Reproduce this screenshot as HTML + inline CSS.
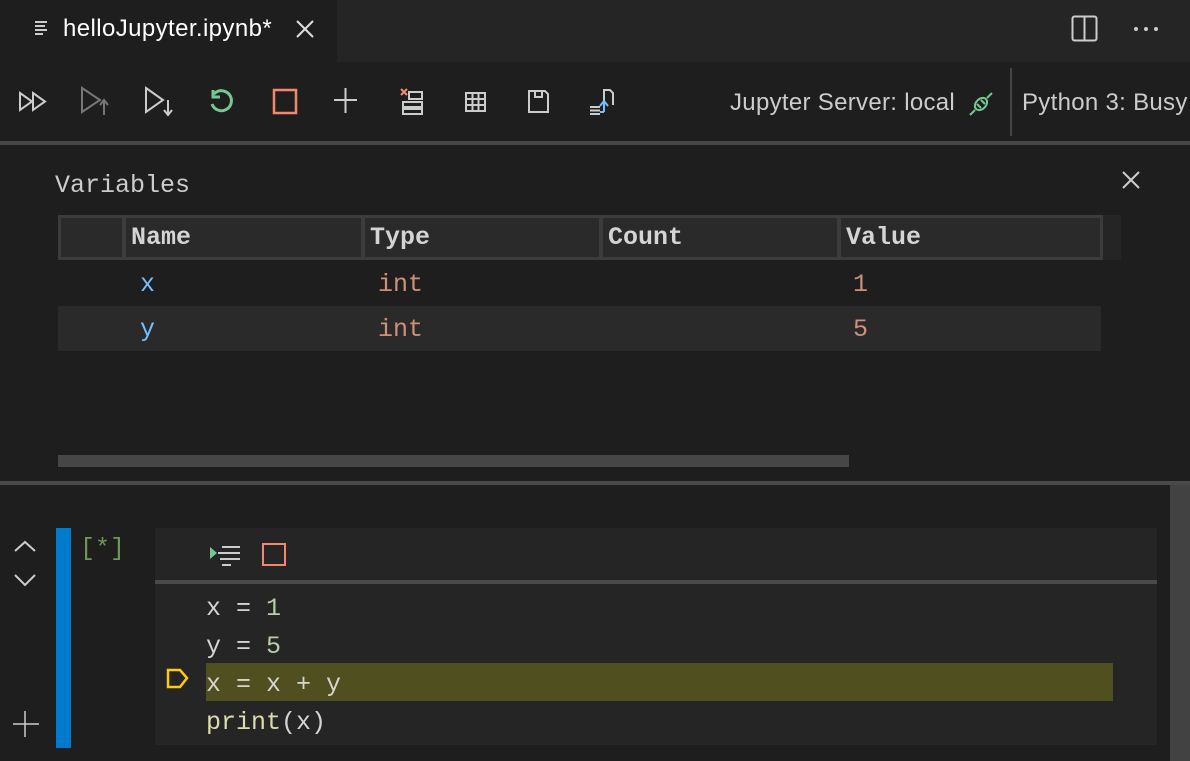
<!DOCTYPE html>
<html><head><style>
*{margin:0;padding:0;box-sizing:border-box}
body{width:1190px;height:761px;background:#1e1e1e;position:relative;overflow:hidden;font-family:"Liberation Sans",sans-serif;color:#ccc}
.a{position:absolute}
.mono{font-family:"Liberation Mono","DejaVu Sans Mono",monospace;font-size:25px}
.th{position:absolute;top:215px;height:45px;border:3px solid #3c3c3c;background:#2a2a2a;font-weight:bold;color:#d4d4d4;padding:8px 5px;line-height:24px}
</style></head><body>
<div class="a" style="left:0;top:0;width:1190px;height:62px;background:#252526"></div>
<div class="a" style="left:0;top:0;width:337px;height:62px;background:#1e1e1e"></div>
<svg class="a" style="left:33px;top:20px" width="16" height="16"><g stroke="#ccc" stroke-width="2"><line x1="2" y1="2" x2="14" y2="2"/><line x1="2" y1="6" x2="12" y2="6"/><line x1="2" y1="10" x2="14" y2="10"/><line x1="2" y1="14" x2="10" y2="14"/></g></svg>
<div class="a" style="left:63px;top:15px;font-size:24px;letter-spacing:0.4px;color:#fff">helloJupyter.ipynb*</div>
<svg class="a" style="left:296px;top:20px" width="18" height="18"><g stroke="#ddd" stroke-width="2"><line x1="1" y1="1" x2="17" y2="17"/><line x1="17" y1="1" x2="1" y2="17"/></g></svg>
<svg class="a" style="left:1071px;top:15px" width="27" height="27"><rect x="1.5" y="1.5" width="24" height="24" rx="2" fill="none" stroke="#ccc" stroke-width="2"/><line x1="13.5" y1="2" x2="13.5" y2="25" stroke="#ccc" stroke-width="2"/></svg>
<svg class="a" style="left:1133px;top:26px" width="28" height="6"><g fill="#ccc"><circle cx="3" cy="3" r="2"/><circle cx="13" cy="3" r="2"/><circle cx="23" cy="3" r="2"/></g></svg>

<!-- toolbar icons -->
<svg class="a" style="left:0;top:80px" width="640" height="45" fill="none" stroke-width="2">
<g stroke="#ccc"><path d="M20 13 L32 21.5 L20 30 Z"/><path d="M33 13 L45 21.5 L33 30 Z"/></g>
<g stroke="#777"><path d="M82 8 L100 20 L82 32 Z"/><path d="M104 35 V21 M100 25 L104 20 L108 25"/></g>
<g stroke="#ccc"><path d="M146 8 L163 20 L146 32 Z"/><path d="M168 20 V34 M164 30 L168 35 L172 30"/></g>
<path d="M214 14 A10 10 0 1 1 212 24 M213 10 V17 H220" stroke="#73c991" stroke-width="3"/>
<rect x="274" y="10" width="22" height="23" stroke="#f48771" stroke-width="2.5"/>
<g stroke="#ccc"><path d="M334 20 H357 M345.5 8 V33"/></g>
<g stroke="#ccc"><rect x="409" y="12" width="13" height="7"/><rect x="403" y="22" width="19" height="5"/><rect x="403" y="29" width="19" height="5"/></g>
<path d="M401 9 L407 15 M407 9 L401 15" stroke="#f48771"/>
<g stroke="#ccc"><rect x="466" y="13" width="19" height="18"/><path d="M466 19 H485 M466 25 H485 M472.5 13 V31 M478.5 13 V31"/></g>
<g stroke="#ccc"><path d="M529 11 H545 L548 14 V32 H529 Z"/><rect x="535" y="11" width="7" height="6"/></g>
<g stroke="#ccc"><path d="M590 27 H600 M590 30.5 H600 M590 34 H600"/><path d="M604 22 V10 H610 L613 13 V25"/></g>
<path d="M604 32 V22 M600 26 L604 21 L608 26 M604 32 H600" stroke="#75beff"/>
</svg>
<div class="a" style="left:730px;top:89px;font-size:24px;letter-spacing:0.3px;color:#ccc">Jupyter Server: local</div>
<svg class="a" style="left:968px;top:91px" width="26" height="26" fill="none" stroke="#73c991" stroke-width="2"><path d="M2 24 L7 19 M24 2 L19 7"/><ellipse cx="13" cy="13" rx="5" ry="7" transform="rotate(45 13 13)"/><path d="M9 13 L13 17 M13 9 L17 13"/></svg>
<div class="a" style="left:1010px;top:68px;width:2px;height:68px;background:#464646"></div>
<div class="a" style="left:1022px;top:89px;font-size:24px;letter-spacing:0.3px;color:#ccc;white-space:nowrap">Python 3: Busy</div>
<div class="a" style="left:0;top:141px;width:1190px;height:4px;background:#464646"></div>

<!-- variables -->
<div class="a mono" style="left:55px;top:171px;color:#ccc">Variables</div>
<svg class="a" style="left:1122px;top:171px" width="18" height="18"><g stroke="#ccc" stroke-width="2"><line x1="1" y1="1" x2="17" y2="17"/><line x1="17" y1="1" x2="1" y2="17"/></g></svg>
<div class="a" style="left:1101px;top:215px;width:20px;height:45px;background:#252526"></div>
<div class="th mono" style="left:58px;width:67px"></div>
<div class="th mono" style="left:123px;width:241px">Name</div>
<div class="th mono" style="left:362px;width:240px">Type</div>
<div class="th mono" style="left:600px;width:240px">Count</div>
<div class="th mono" style="left:838px;width:265px">Value</div>
<div class="a" style="left:58px;top:306px;width:1043px;height:45px;background:#2a2a2a"></div>
<div class="a mono" style="left:140px;top:270px;color:#75beff">x</div>
<div class="a mono" style="left:378px;top:270px;color:#ce9178">int</div>
<div class="a mono" style="left:853px;top:270px;color:#ce9178">1</div>
<div class="a mono" style="left:140px;top:315px;color:#75beff">y</div>
<div class="a mono" style="left:378px;top:315px;color:#ce9178">int</div>
<div class="a mono" style="left:853px;top:315px;color:#ce9178">5</div>
<div class="a" style="left:58px;top:455px;width:791px;height:12px;background:#464646"></div>
<div class="a" style="left:0;top:481px;width:1190px;height:4px;background:#4a4a4a"></div>
<div class="a" style="left:1170px;top:485px;width:20px;height:276px;background:#424242"></div>

<!-- cell -->
<svg class="a" style="left:12px;top:538px" width="28" height="210" fill="none" stroke="#ccc" stroke-width="2"><path d="M3 13 L13 4 L23 13"/><path d="M3 37 L13 47 L23 37"/><path d="M1 186 H27 M13 173 V199" stroke-width="1.5"/></svg>
<div class="a" style="left:56px;top:528px;width:15px;height:220px;background:#007acc"></div>
<div class="a mono" style="left:80px;top:534px;color:#6a9955">[*]</div>
<div class="a" style="left:155px;top:528px;width:1002px;height:217px;background:#252526"></div>
<div class="a" style="left:155px;top:580px;width:1002px;height:4px;background:#4a4a4a"></div>
<svg class="a" style="left:205px;top:540px" width="90" height="30" fill="none"><path d="M5 7 L12 13 L5 19 Z" fill="#73c991"/><g stroke="#ccc" stroke-width="2"><path d="M17 7 H35 M13 13 H35 M15 19 H35 M17 25 H26"/></g><rect x="58" y="4" width="22" height="21" stroke="#f48771" stroke-width="2"/></svg>
<div class="a" style="left:206px;top:663px;width:907px;height:38px;background:#4f4f1f"></div>
<svg class="a" style="left:165px;top:667px" width="26" height="26" fill="none"><path d="M3 3 H15 L22 11 L15 20 H3 Z" stroke="#fc0" stroke-width="2.5"/></svg>
<div class="a mono" style="left:206px;top:590px;line-height:38px;color:#d4d4d4;white-space:pre">x = <span style="color:#b5cea8">1</span>
y = <span style="color:#b5cea8">5</span>
x = x + y
<span style="color:#dcdcaa">print</span>(x)</div>
</body></html>
